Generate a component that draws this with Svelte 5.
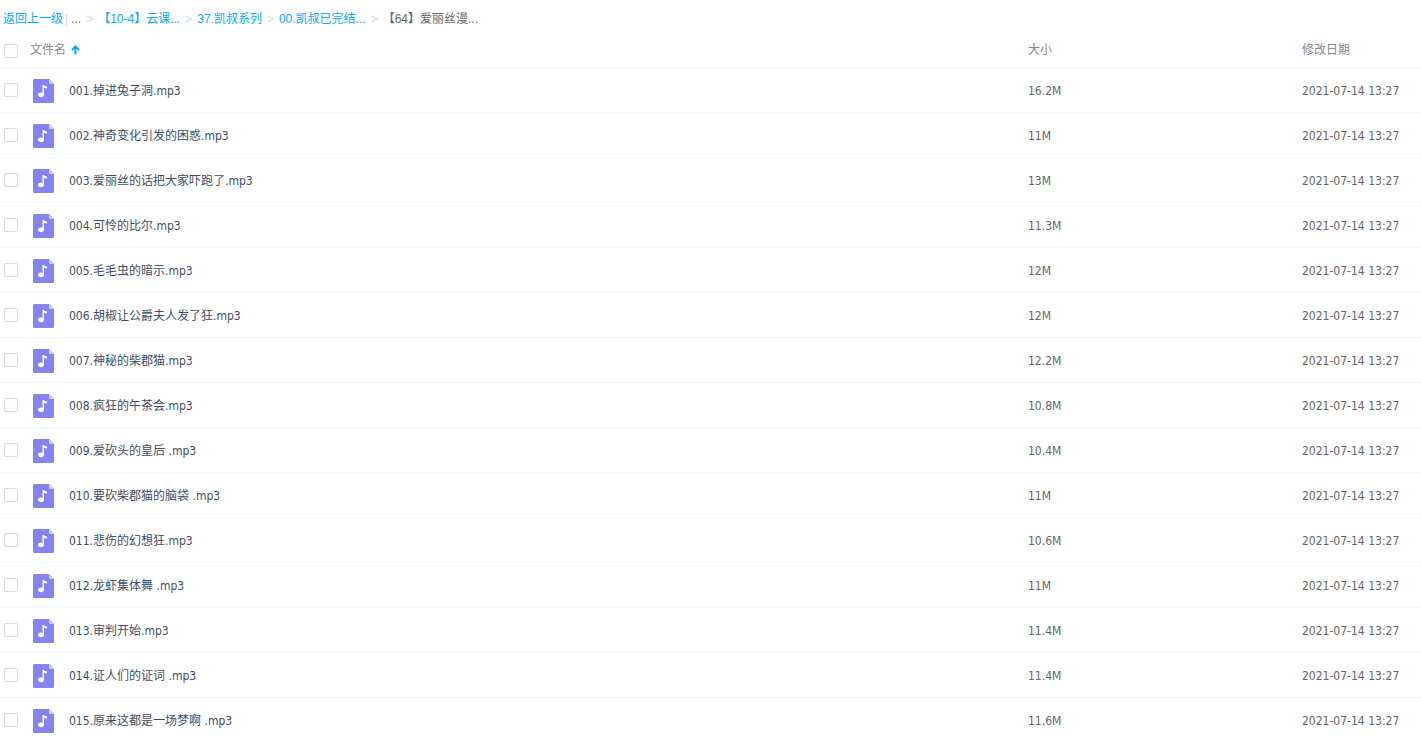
<script>
  const crumbs = ["【10-4】云课...", "37.凯叔系列", "00.凯叔已完结..."];
  const current = "【64】爱丽丝漫...";
  const date = "2021-07-14 13:27";

  let files = $state(
    [
      ["001.掉进兔子洞.mp3", "16.2M"],
      ["002.神奇变化引发的困惑.mp3", "11M"],
      ["003.爱丽丝的话把大家吓跑了.mp3", "13M"],
      ["004.可怜的比尔.mp3", "11.3M"],
      ["005.毛毛虫的暗示.mp3", "12M"],
      ["006.胡椒让公爵夫人发了狂.mp3", "12M"],
      ["007.神秘的柴郡猫.mp3", "12.2M"],
      ["008.疯狂的午茶会.mp3", "10.8M"],
      ["009.爱砍头的皇后 .mp3", "10.4M"],
      ["010.要砍柴郡猫的脑袋 .mp3", "11M"],
      ["011.悲伤的幻想狂.mp3", "10.6M"],
      ["012.龙虾集体舞 .mp3", "11M"],
      ["013.审判开始.mp3", "11.4M"],
      ["014.证人们的证词 .mp3", "11.4M"],
      ["015.原来这都是一场梦啊 .mp3", "11.6M"],
    ].map(([name, size]) => ({ name, size, checked: false }))
  );

  let ascending = $state(true);
  let allChecked = $derived(files.every((f) => f.checked));

  const toggleAll = (e) => {
    for (const f of files) f.checked = e.target.checked;
  };

  const toggleSort = () => {
    ascending = !ascending;
    files.reverse();
  };
</script>

<main>
  <nav class="crumbs">
    <a href="#up">返回上一级</a>
    <span class="bar">|</span>
    <span>...</span>
    {#each crumbs as crumb}
      <span class="sep">&gt;</span>
      <a href="#dir">{crumb}</a>
    {/each}
    <span class="sep">&gt;</span>
    <span class="current">{current}</span>
  </nav>

  <table>
    <colgroup>
      <col class="col-check" />
      <col />
      <col class="col-size" />
      <col class="col-date" />
    </colgroup>
    <thead>
      <tr>
        <th class="check">
          <input type="checkbox" aria-label="全选" checked={allChecked} onchange={toggleAll} />
        </th>
        <th>
          <button class="sort" onclick={toggleSort}>
            文件名
            <svg class:down={!ascending} width="9" height="10" viewBox="0 0 9 10">
              <path d="M4.5 9.5V1.5M1 5L4.5 1.3L8 5" fill="none" stroke="#09aaff" stroke-width="1.9" />
            </svg>
          </button>
        </th>
        <th>大小</th>
        <th>修改日期</th>
      </tr>
    </thead>
    <tbody>
      {#each files as file (file.name)}
        <tr>
          <td class="check">
            <input type="checkbox" id={file.name} bind:checked={file.checked} />
          </td>
          <td>
            <label class="name" for={file.name}>
              <svg width="21" height="24" viewBox="0 0 21 24">
                <path d="M1.5 0H16L21 5V22.5Q21 24 19.5 24H1.5Q0 24 0 22.5V1.5Q0 0 1.5 0Z" fill="#8383f1" />
                <path d="M16 0L21 5H17.2Q16 5 16 3.8Z" fill="#cdcdfa" />
                <ellipse cx="8" cy="15.8" rx="2.9" ry="2.4" fill="#fff" />
                <path d="M9.5 6H10.8Q11.2 7.2 14 7.4V9.4Q12 9.4 10.9 8.8V15.8H9.5Z" fill="#fff" />
              </svg>
              {file.name}
            </label>
          </td>
          <td>{file.size}</td>
          <td>{date}</td>
        </tr>
      {/each}
    </tbody>
  </table>
</main>

<style>
  :global(body) {
    margin: 0;
    background: #fff;
  }

  main {
    font-family: "DejaVu Sans Condensed", "Noto Sans CJK SC", sans-serif;
    font-size: 12px;
    line-height: 16px;
    color: #666;
  }

  .crumbs {
    display: flex;
    align-items: center;
    height: 32px;
    padding: 5px 3px 0;
    box-sizing: border-box;
    font-family: "Liberation Sans", "Noto Sans CJK SC", sans-serif;
    white-space: nowrap;
  }

  .crumbs a {
    color: #09aaff;
    text-decoration: none;
  }

  .crumbs a:hover {
    text-decoration: underline;
  }

  .bar {
    margin: 0 3px 0 2px;
    color: #c4dbfe;
  }

  .sep {
    margin: 0 5px;
    color: #c4dbfe;
  }

  table {
    width: 100%;
    table-layout: fixed;
    border-collapse: separate;
    border-spacing: 0;
  }

  .col-check {
    width: 30px;
  }

  .col-size {
    width: 274px;
  }

  .col-date {
    width: 119px;
  }

  th,
  td {
    box-sizing: border-box;
    height: 45px;
    padding: 2px 0 0;
    text-align: left;
    vertical-align: middle;
    white-space: nowrap;
    border-bottom: 1px solid #f2f6fd;
  }

  th {
    height: 36px;
    padding: 0;
    border-bottom: none;
    font-weight: 400;
    color: #888;
  }

  th.check {
    padding-top: 2px;
  }

  td.check {
    padding-bottom: 2px;
  }

  tbody tr:first-child td {
    padding-top: 0;
    border-top: 1px solid #f2f6fd;
  }

  .sort {
    display: flex;
    align-items: center;
    gap: 5px;
    padding: 0;
    border: none;
    background: none;
    font: inherit;
    color: inherit;
    cursor: pointer;
  }

  .down {
    transform: rotate(180deg);
  }

  input {
    appearance: none;
    display: block;
    box-sizing: border-box;
    width: 14px;
    height: 14px;
    margin: 0 0 0 4px;
    border: 1px solid #d5dae6;
    border-radius: 2px;
    background: #fff;
    cursor: pointer;
  }

  input:checked {
    border-color: #09aaff;
    background: #09aaff;
  }

  .name {
    display: flex;
    align-items: center;
    gap: 15px;
    padding-left: 3px;
    color: #424e67;
  }

  .name svg {
    flex: none;
  }
</style>
